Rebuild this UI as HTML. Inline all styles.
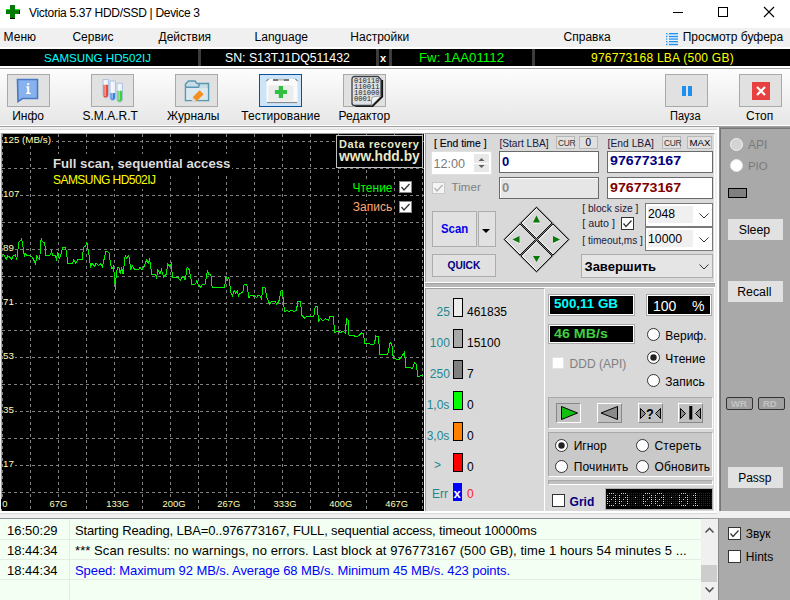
<!DOCTYPE html>
<html><head><meta charset='utf-8'><style>
html,body{margin:0;padding:0;width:790px;height:600px;overflow:hidden;background:#f0f0f0;font-family:'Liberation Sans', sans-serif}
.r{position:absolute}
.t{position:absolute;white-space:pre;font-family:'Liberation Sans', sans-serif}
</style></head><body>
<div class='r' style='left:0px;top:0px;width:790px;height:28px;background:#fff'></div>
<svg class='r' style='left:0;top:0' width='28' height='28' shape-rendering='crispEdges'>
<rect x='10' y='5' width='5' height='13' fill='#037a03'/><rect x='6' y='9' width='14' height='5' fill='#037a03'/>
<rect x='6' y='9' width='4' height='1' fill='#10e810'/><rect x='15' y='9' width='5' height='1' fill='#10e810'/>
<rect x='19' y='10' width='1' height='4' fill='#000'/><rect x='10' y='18' width='5' height='1' fill='#000'/>
</svg>
<div class='t' style='left:29px;top:6.85px;font-size:12px;line-height:12px;color:#000;letter-spacing:-0.3px;'>Victoria 5.37 HDD/SSD | Device 3</div>
<div class='r' style='left:673px;top:12px;width:10px;height:1px;background:#000'></div>
<div class='r' style='left:718px;top:7px;width:10px;height:10px;box-sizing:border-box;border:1px solid #000'></div>
<svg class='r' style='left:763px;top:6px' width='12' height='12'><path d='M1,1L11,11M11,1L1,11' stroke='#000' stroke-width='1.1'/></svg>
<div class='r' style='left:0px;top:28px;width:790px;height:19px;background:#f0f0f0'></div>
<div class='r' style='left:0px;top:47px;width:790px;height:2px;background:#fff'></div>
<div class='t' style='left:3.5999999999999996px;top:30.85px;font-size:12px;line-height:12px;color:#000;'>Меню</div>
<div class='t' style='left:72.4px;top:30.85px;font-size:12px;line-height:12px;color:#000;'>Сервис</div>
<div class='t' style='left:158.5px;top:30.85px;font-size:12px;line-height:12px;color:#000;'>Действия</div>
<div class='t' style='left:254.6px;top:30.85px;font-size:12px;line-height:12px;color:#000;'>Language</div>
<div class='t' style='left:350.3px;top:30.85px;font-size:12px;line-height:12px;color:#000;'>Настройки</div>
<div class='t' style='left:563.6px;top:30.85px;font-size:12px;line-height:12px;color:#000;'>Справка</div>
<div class='t' style='left:682.7px;top:30.85px;font-size:12px;line-height:12px;color:#000;'>Просмотр буфера</div>
<svg class='r' style='left:662px;top:30px' width='20' height='18'>
<rect x='4' y='4' width='12' height='2.2' fill='#c8e2fa'/><rect x='4' y='12.2' width='12' height='2.2' fill='#c8e2fa'/>
<g fill='#1e90f0'><rect x='4' y='3' width='1.3' height='1.2'/><rect x='7' y='3' width='9' height='1.2'/>
<rect x='4' y='6' width='1.3' height='1.2'/><rect x='7' y='6' width='9' height='1.2'/>
<rect x='4' y='11' width='1.3' height='1.2'/><rect x='7' y='11' width='9' height='1.2'/>
<rect x='4' y='14' width='1.3' height='1.2'/><rect x='7' y='14' width='9' height='1.2'/></g>
<g fill='#5ab0f8'><rect x='4' y='8.2' width='1.3' height='1.8'/><rect x='7' y='8.2' width='9' height='1.8'/></g>
</svg>
<div class='r' style='left:0px;top:49px;width:790px;height:17px;background:#000'></div>
<div class='r' style='left:198px;top:49px;width:3px;height:17px;background:#3c3c3c'></div>
<div class='r' style='left:376px;top:49px;width:3px;height:17px;background:#3c3c3c'></div>
<div class='r' style='left:389px;top:49px;width:3px;height:17px;background:#3c3c3c'></div>
<div class='r' style='left:532px;top:49px;width:3px;height:17px;background:#3c3c3c'></div>
<div class='t' style='left:44px;top:52.19px;font-size:11.6px;line-height:11.6px;color:#00ffff;'>SAMSUNG HD502IJ</div>
<div class='t' style='left:225px;top:51.59px;font-size:12.3px;line-height:12.3px;color:#fff;'>SN: S13TJ1DQ511432</div>
<div class='t' style='left:380px;top:52.69px;font-size:11px;line-height:11px;color:#fff;font-weight:700;'>x</div>
<div class='t' style='left:419px;top:51.85px;font-size:12px;line-height:12px;color:#00ff00;transform:scaleX(1.105);transform-origin:0 0;'>Fw: 1AA01112</div>
<div class='t' style='left:591px;top:51.85px;font-size:12px;line-height:12px;color:#ffff00;letter-spacing:0.25px;'>976773168 LBA (500 GB)</div>
<div class='r' style='left:0px;top:66px;width:790px;height:2px;background:#fff'></div>
<div class='r' style='left:0px;top:68px;width:790px;height:1px;background:#a0a0a0'></div>
<div class='r' style='left:0px;top:69px;width:790px;height:56px;background:linear-gradient(#fdfdfd,#e6e6e6)'></div>
<div class='r' style='left:0px;top:125px;width:790px;height:1px;background:#fff'></div>
<div class='r' style='left:0px;top:126px;width:790px;height:1px;background:#a0a0a0'></div>
<div class='r' style='left:0px;top:127px;width:790px;height:2px;background:#f0f0f0'></div>
<div class='r' style='left:0px;top:129px;width:790px;height:1px;background:#dadada'></div>
<div class='r' style='left:0px;top:130px;width:790px;height:3px;background:#fff'></div>
<div class='r' style='left:7px;top:74px;width:43px;height:33px;box-sizing:border-box;border:1px solid #a9a9a9;background:#e1e1e1'></div>
<div class='t' style='left:12.2px;top:109.85px;font-size:12px;line-height:12px;color:#000;'>Инфо</div>
<div class='r' style='left:91px;top:74px;width:43px;height:33px;box-sizing:border-box;border:1px solid #a9a9a9;background:#e1e1e1'></div>
<div class='t' style='left:82.5px;top:109.85px;font-size:12px;line-height:12px;color:#000;'>S.M.A.R.T</div>
<div class='r' style='left:175px;top:74px;width:43px;height:33px;box-sizing:border-box;border:1px solid #a9a9a9;background:#e1e1e1'></div>
<div class='t' style='left:167px;top:109.85px;font-size:12px;line-height:12px;color:#000;'>Журналы</div>
<div class='r' style='left:259px;top:74px;width:43px;height:33px;box-sizing:border-box;border:1px solid #0a50a0;background:#cce4f7'></div>
<div class='t' style='left:241.3px;top:109.85px;font-size:12px;line-height:12px;color:#000;letter-spacing:0.1px;'>Тестирование</div>
<div class='r' style='left:343px;top:74px;width:43px;height:33px;box-sizing:border-box;border:1px solid #a9a9a9;background:#e1e1e1'></div>
<div class='t' style='left:338.5px;top:109.85px;font-size:12px;line-height:12px;color:#000;'>Редактор</div>
<div class='r' style='left:665px;top:74px;width:43px;height:33px;box-sizing:border-box;border:1px solid #a9a9a9;background:#e1e1e1'></div>
<div class='t' style='left:669.5px;top:109.85px;font-size:12px;line-height:12px;color:#000;transform:scaleX(0.915);transform-origin:0 0;'>Пауза</div>
<div class='r' style='left:739px;top:74px;width:43px;height:33px;box-sizing:border-box;border:1px solid #a9a9a9;background:#e1e1e1'></div>
<div class='t' style='left:746px;top:109.85px;font-size:12px;line-height:12px;color:#000;'>Стоп</div>
<svg class='r' style='left:16px;top:78px' width='24' height='26'>
<path d='M1.5,1.5h20v19h-15l-4.5,3z' fill='#88b2ee' stroke='#4a78c4' stroke-width='1.6'/>
<rect x='11.2' y='5.2' width='2' height='1.8' fill='#fff'/><path d='M10.2,8.3h3v6.4h1.6v1.3h-4.8v-1.3h1.2v-5.1h-1z' fill='#fff'/>
</svg>
<svg class='r' style='left:98px;top:76px' width='30' height='30'>
<g stroke='#a8c0e0' stroke-width='0.9'>
<path d='M5,3.5h5.5v15.75a2.75,2.75 0 0 1 -5.5,0z' fill='#eef3fb'/>
<path d='M12,5h5.5v16.75a2.75,2.75 0 0 1 -5.5,0z' fill='#eef3fb'/>
<path d='M19,7.25h5.5v16.25a2.75,2.75 0 0 1 -5.5,0z' fill='#eef3fb'/></g>
<path d='M5.4,8.75h4.7v10.5a2.35,2.35 0 0 1 -4.7,0z' fill='#e84a3a'/>
<path d='M12.4,17h4.7v4.75a2.35,2.35 0 0 1 -4.7,0z' fill='#3a84e0'/>
<path d='M19.4,14.75h4.7v8.75a2.35,2.35 0 0 1 -4.7,0z' fill='#44cc44'/>
<g fill='#fff' opacity='0.6'><rect x='6.5' y='5' width='1.2' height='15'/><rect x='13.5' y='6.5' width='1.2' height='16'/><rect x='20.5' y='9' width='1.2' height='15'/></g>
</svg>
<svg class='r' style='left:182px;top:76px' width='30' height='30'>
<path d='M3.5,24.5V8L6.5,5H13L15,7.5H26.5V24.5Z' fill='#c9dde6' stroke='#5a98b2' stroke-width='1.5'/>
<path d='M4.3,12H25.7V23.8H4.3Z' fill='#dbe9ef'/>
<path d='M3.5,11.2H16.5L17.5,7.8' fill='none' stroke='#5a98b2' stroke-width='1.5'/>
<path d='M10.6,21.2L17.6,14.2L21.6,18.2L14.6,25.2Z' fill='#f59020'/>
<path d='M10.6,21.2L14.6,25.2L9.5,26.5Z' fill='#d8d8d8'/>
</svg>
<svg class='r' style='left:262px;top:76px' width='38' height='30'>
<path d='M4.5,5L6.5,3H33.5L35.5,5V25.5a1,1 0 0 1 -1,1H5.5a1,1 0 0 1 -1,-1Z' fill='#fbfbfb'/>
<path d='M5,26.5H35' stroke='#8a8a8a' stroke-width='1.2'/>
<path d='M4.3,5.2L6.8,2.7M35.7,5.2L33.2,2.7' stroke='#555' stroke-width='1'/>
<rect x='11' y='3.2' width='5' height='1.6' fill='#555'/><rect x='16' y='2.8' width='6' height='1.8' fill='#b8b8b8'/><rect x='22' y='3.2' width='5' height='1.6' fill='#555'/>
<rect x='6.25' y='9.25' width='25.25' height='15.5' rx='1.5' fill='#ececec'/>
<path d='M16.75,10H21V14H25V18H21V22H16.75V18H12.9V14H16.75Z' fill='#30c040'/>
</svg>
<svg class='r' style='left:348px;top:74px' width='38' height='34'>
<path d='M34,6V22.5L24.5,32H7.5' fill='none' stroke='#111' stroke-width='2.2'/>
<path d='M6.5,2.5H30L33,5.5V22L23.5,31.5H6.5a2.5,2.5 0 0 1 -2.5,-2.5V5a2.5,2.5 0 0 1 2.5,-2.5Z' fill='#dde1e5' stroke='#3a4048' stroke-width='1.3'/>
<path d='M33,22L23.5,31.5V25.5a3,3 0 0 1 3,-3Z' fill='#f2f2f2' stroke='#888' stroke-width='0.8'/>
<g font-family='Liberation Mono' font-size='7.1' fill='#1a1a1a'>
<text x='6' y='8.6'>010110</text><text x='6' y='14.9'>110011</text><text x='6' y='21.1'>101000</text><text x='6' y='27.3'>0001</text></g>
</svg>
<div class='r' style='left:682px;top:86px;width:4px;height:10px;background:#2090f0'></div>
<div class='r' style='left:688px;top:86px;width:4px;height:10px;background:#2090f0'></div>
<div class='r' style='left:752px;top:82px;width:18px;height:18px;background:#e84040'></div>
<svg class='r' style='left:752px;top:82px' width='18' height='18'><path d='M5,5L13,13M13,5L5,13' stroke='#fff' stroke-width='2.2'/></svg>
<div class='r' style='left:0px;top:133px;width:790px;height:385px;background:#f0f0f0'></div>
<div class='r' style='left:1px;top:133px;width:424px;height:379px;box-sizing:border-box;border-top:1px solid #a0a0a0;border-left:1px solid #a0a0a0;border-right:1px solid #fff;border-bottom:1px solid #fff;background:#000'></div>
<svg class='r' style='left:0;top:0' width='790' height='600' shape-rendering='crispEdges'><line x1='2' y1='141.5' x2='424' y2='141.5' stroke='#808080' stroke-dasharray='3 3'/><line x1='2' y1='168.5' x2='424' y2='168.5' stroke='#808080' stroke-dasharray='3 3'/><line x1='2' y1='195.5' x2='424' y2='195.5' stroke='#808080' stroke-dasharray='3 3'/><line x1='2' y1='222.5' x2='424' y2='222.5' stroke='#808080' stroke-dasharray='3 3'/><line x1='2' y1='249.5' x2='424' y2='249.5' stroke='#808080' stroke-dasharray='3 3'/><line x1='2' y1='276.5' x2='424' y2='276.5' stroke='#808080' stroke-dasharray='3 3'/><line x1='2' y1='303.5' x2='424' y2='303.5' stroke='#808080' stroke-dasharray='3 3'/><line x1='2' y1='330.5' x2='424' y2='330.5' stroke='#808080' stroke-dasharray='3 3'/><line x1='2' y1='357.5' x2='424' y2='357.5' stroke='#808080' stroke-dasharray='3 3'/><line x1='2' y1='384.5' x2='424' y2='384.5' stroke='#808080' stroke-dasharray='3 3'/><line x1='2' y1='411.5' x2='424' y2='411.5' stroke='#808080' stroke-dasharray='3 3'/><line x1='2' y1='438.5' x2='424' y2='438.5' stroke='#808080' stroke-dasharray='3 3'/><line x1='2' y1='465.5' x2='424' y2='465.5' stroke='#808080' stroke-dasharray='3 3'/><line x1='2' y1='492.5' x2='424' y2='492.5' stroke='#808080' stroke-dasharray='3 3'/><line x1='2.5' y1='134' x2='2.5' y2='511' stroke='#808080' stroke-dasharray='3 3'/><line x1='30.5' y1='134' x2='30.5' y2='511' stroke='#808080' stroke-dasharray='3 3'/><line x1='58.5' y1='134' x2='58.5' y2='511' stroke='#808080' stroke-dasharray='3 3'/><line x1='86.5' y1='134' x2='86.5' y2='511' stroke='#808080' stroke-dasharray='3 3'/><line x1='114.5' y1='134' x2='114.5' y2='511' stroke='#808080' stroke-dasharray='3 3'/><line x1='142.5' y1='134' x2='142.5' y2='511' stroke='#808080' stroke-dasharray='3 3'/><line x1='170.5' y1='134' x2='170.5' y2='511' stroke='#808080' stroke-dasharray='3 3'/><line x1='198.5' y1='134' x2='198.5' y2='511' stroke='#808080' stroke-dasharray='3 3'/><line x1='226.5' y1='134' x2='226.5' y2='511' stroke='#808080' stroke-dasharray='3 3'/><line x1='254.5' y1='134' x2='254.5' y2='511' stroke='#808080' stroke-dasharray='3 3'/><line x1='282.5' y1='134' x2='282.5' y2='511' stroke='#808080' stroke-dasharray='3 3'/><line x1='310.5' y1='134' x2='310.5' y2='511' stroke='#808080' stroke-dasharray='3 3'/><line x1='338.5' y1='134' x2='338.5' y2='511' stroke='#808080' stroke-dasharray='3 3'/><line x1='366.5' y1='134' x2='366.5' y2='511' stroke='#808080' stroke-dasharray='3 3'/><line x1='394.5' y1='134' x2='394.5' y2='511' stroke='#808080' stroke-dasharray='3 3'/><line x1='422.5' y1='134' x2='422.5' y2='511' stroke='#808080' stroke-dasharray='3 3'/></svg>
<svg class='r' style='left:0;top:0' width='790' height='600'><path d='M2.1,255.8 L3.5,254.4 L6.3,259.2 L7.7,255.8 L9.1,256.5 L11.8,259.2 L13.2,255.8 L15.3,255.1 L16.7,259.5 L18.8,242.5 L20.9,240.4 L21.6,238.4 L23.0,247.4 L24.4,255.8 L25.8,253.7 L27.2,255.8 L29.9,255.8 L32.0,257.2 L33.4,259.2 L35.5,263.4 L36.9,255.8 L38.3,258.6 L39.7,259.2 L41.1,238.4 L42.5,241.8 L44.6,242.5 L46.0,255.8 L50.1,255.1 L51.5,251.6 L52.9,255.8 L55.0,255.1 L56.4,259.2 L57.8,251.6 L59.2,258.6 L60.6,255.8 L62.7,247.4 L65.5,247.4 L66.9,255.8 L67.5,263.4 L72.4,263.4 L73.8,259.9 L75.9,263.4 L78.0,259.2 L82.2,259.2 L83.6,247.4 L85.7,246.0 L87.0,242.5 L89.1,255.8 L90.5,266.9 L91.9,263.4 L94.7,266.2 L96.1,263.4 L98.9,265.5 L100.3,263.4 L102.4,266.9 L104.5,257.2 L105.8,251.6 L107.9,251.6 L109.2,253.2 L110.6,264.4 L112.0,269.2 L113.4,266.5 L114.7,279.0 L115.4,290.1 L116.1,276.2 L117.5,267.2 L118.9,267.9 L120.3,274.1 L121.7,267.2 L123.1,274.1 L125.2,255.3 L126.6,258.1 L128.7,255.3 L130.8,269.9 L132.2,265.8 L134.9,269.9 L138.4,269.9 L139.8,267.2 L141.9,269.9 L144.0,266.5 L146.8,259.5 L148.2,263.0 L149.6,259.5 L151.7,274.1 L155.1,274.1 L156.5,277.6 L157.9,269.9 L160.0,274.1 L161.4,269.9 L163.5,276.9 L166.3,274.1 L167.7,263.7 L169.8,266.5 L171.2,263.7 L172.5,277.6 L177.4,276.9 L180.2,280.4 L182.3,276.9 L184.4,277.6 L185.1,280.4 L187.2,267.2 L189.3,269.9 L192.0,284.6 L195.5,283.9 L196.9,280.4 L198.3,284.6 L200.4,287.4 L202.5,284.6 L205.3,283.9 L207.4,270.6 L208.8,274.1 L210.8,274.1 L212.2,287.4 L224.6,287.0 L226.0,277.3 L227.4,280.1 L228.8,277.3 L230.9,292.6 L232.3,296.1 L234.4,290.5 L235.8,293.3 L237.2,290.5 L238.6,296.1 L239.9,293.3 L242.7,292.6 L244.1,284.9 L246.9,284.9 L249.0,298.2 L250.4,295.4 L253.2,296.1 L254.6,295.4 L256.7,297.5 L258.1,295.4 L260.1,296.1 L261.5,298.9 L262.9,287.7 L265.0,287.7 L267.1,298.2 L269.9,304.4 L271.3,301.0 L275.5,301.7 L276.9,304.4 L278.9,301.0 L281.0,291.2 L282.4,290.5 L284.5,311.4 L287.3,310.7 L288.7,311.4 L292.2,310.0 L293.6,311.4 L296.4,310.7 L297.7,301.7 L300.5,301.7 L301.9,315.6 L304.7,318.4 L306.8,316.3 L313.8,316.3 L315.2,306.5 L317.2,306.5 L318.6,321.2 L319.0,320.9 L320.5,318.5 L322.9,320.9 L325.3,318.5 L328.5,320.1 L330.0,316.1 L333.2,316.1 L334.8,332.7 L336.4,331.9 L338.7,331.2 L340.3,332.7 L342.7,331.2 L345.1,332.7 L346.7,318.5 L348.2,320.1 L349.0,335.1 L353.8,335.1 L355.4,336.7 L358.5,335.9 L361.7,332.7 L363.3,333.5 L364.9,343.8 L367.2,343.0 L369.6,343.8 L372.0,344.6 L374.4,343.8 L375.9,335.9 L378.3,336.7 L379.9,354.1 L387.8,354.1 L390.2,342.2 L391.8,344.6 L393.3,358.1 L395.7,358.9 L398.9,359.6 L401.3,357.3 L404.4,352.5 L406.0,367.6 L408.4,367.6 L412.3,368.3 L414.7,362.8 L416.3,364.4 L417.9,376.3 L422.6,375.5' fill='none' stroke='#00f000' stroke-width='1' shape-rendering='crispEdges'/></svg>
<div class='t' style='left:3px;top:135.1px;font-size:9.8px;line-height:10px;color:#ffffb8;background:#000;padding-right:1px'>125 (MB/s)</div>
<div class='t' style='left:3px;top:189.1px;font-size:9.8px;line-height:10px;color:#ffffb8;background:#000;padding-right:1px'>107</div>
<div class='t' style='left:3px;top:243.1px;font-size:9.8px;line-height:10px;color:#ffffb8;background:#000;padding-right:1px'>89</div>
<div class='t' style='left:3px;top:297.1px;font-size:9.8px;line-height:10px;color:#ffffb8;background:#000;padding-right:1px'>71</div>
<div class='t' style='left:3px;top:351.1px;font-size:9.8px;line-height:10px;color:#ffffb8;background:#000;padding-right:1px'>53</div>
<div class='t' style='left:3px;top:405.1px;font-size:9.8px;line-height:10px;color:#ffffb8;background:#000;padding-right:1px'>35</div>
<div class='t' style='left:3px;top:459.1px;font-size:9.8px;line-height:10px;color:#ffffb8;background:#000;padding-right:1px'>17</div>
<div class='t' style='left:1.3px;top:498.9px;font-size:9.4px;line-height:10px;color:#ffffb8;background:#000;padding:0 1px'>0</div>
<div class='t' style='left:48.5px;top:498.9px;font-size:9.4px;line-height:10px;color:#ffffb8;background:#000;padding:0 1px'>67G</div>
<div class='t' style='left:105.2px;top:498.9px;font-size:9.4px;line-height:10px;color:#ffffb8;background:#000;padding:0 1px'>133G</div>
<div class='t' style='left:161.5px;top:498.9px;font-size:9.4px;line-height:10px;color:#ffffb8;background:#000;padding:0 1px'>200G</div>
<div class='t' style='left:216.3px;top:498.9px;font-size:9.4px;line-height:10px;color:#ffffb8;background:#000;padding:0 1px'>267G</div>
<div class='t' style='left:272.5px;top:498.9px;font-size:9.4px;line-height:10px;color:#ffffb8;background:#000;padding:0 1px'>333G</div>
<div class='t' style='left:328.3px;top:498.9px;font-size:9.4px;line-height:10px;color:#ffffb8;background:#000;padding:0 1px'>400G</div>
<div class='t' style='left:384.2px;top:498.9px;font-size:9.4px;line-height:10px;color:#ffffb8;background:#000;padding:0 1px'>467G</div>
<div class='t' style='left:53px;top:156.83px;font-size:13.2px;line-height:13.2px;color:#dcdcdc;font-weight:700;background:#000;padding:3px 2px 3px 5px;margin-left:-5px;margin-top:-3px'>Full scan, sequential access</div>
<div class='t' style='left:53px;top:173.85px;font-size:12px;line-height:12px;color:#ffff00;letter-spacing:-0.55px;background:#000;padding:2px 2px 3px 5px;margin-left:-5px;margin-top:-2px'>SAMSUNG HD502IJ</div>
<div class='r' style='left:336px;top:135px;width:87px;height:33px;box-sizing:border-box;border:1px solid #c0c0c0;background:#000'></div>
<div class='t' style='left:339px;top:138.69px;font-size:11px;line-height:11px;color:#e8e8c8;font-weight:700;letter-spacing:0.6px;'>Data recovery</div>
<div class='t' style='left:339px;top:150.33px;font-size:13.8px;line-height:13.8px;color:#e8e8c8;font-weight:700;'>www.hdd.by</div>
<div class='t' style='left:352.5px;top:181.85px;font-size:12px;line-height:12px;color:#00ff00;background:#000'>Чтение</div>
<div class='t' style='left:352.8px;top:201.35px;font-size:12px;line-height:12px;color:#ffa870;background:#000'>Запись</div>
<div class='r' style='left:399px;top:181px;width:13px;height:12px;box-sizing:border-box;border:1px solid #888;background:#fff'></div>
<svg class='r' style='left:399px;top:181px' width='13' height='12'><path d='M2.5,6l2.5,3l5.5,-6' fill='none' stroke='#333' stroke-width='1.3'/></svg>
<div class='r' style='left:399px;top:201px;width:13px;height:12px;box-sizing:border-box;border:1px solid #888;background:#fff'></div>
<svg class='r' style='left:399px;top:201px' width='13' height='12'><path d='M2.5,6l2.5,3l5.5,-6' fill='none' stroke='#333' stroke-width='1.3'/></svg>
<div class='r' style='left:425px;top:133px;width:290px;height:150px;box-sizing:border-box;border-top:1px solid #a0a0a0;border-left:1px solid #a0a0a0;border-right:1px solid #fff;background:#d9d9d9'></div>
<div class='r' style='left:425px;top:282px;width:290px;height:1px;background:#fff'></div>
<div class='r' style='left:425px;top:283px;width:290px;height:1px;background:#a0a0a0'></div>
<div class='r' style='left:425px;top:284px;width:290px;height:3px;background:#b8b8b8'></div>
<div class='r' style='left:425px;top:287px;width:290px;height:1px;background:#fff'></div>
<div class='t' style='left:434px;top:139.20px;font-size:10.4px;line-height:10.4px;color:#000018;-webkit-text-stroke:0.12px #000018'>[ End time ]</div>
<div class='r' style='left:431px;top:151px;width:61px;height:24px;box-sizing:border-box;border:1px solid #e0e0e0;background:#fff'></div>
<div class='t' style='left:433.5px;top:157.74px;font-size:12.6px;line-height:12.6px;color:#7a7a7a;'>12:00</div>
<div class='r' style='left:474px;top:154px;width:15px;height:9px;background:#e8e8e8'></div>
<div class='r' style='left:474px;top:164px;width:15px;height:8px;background:#e8e8e8'></div>
<svg class='r' style='left:474px;top:154px' width='15' height='18'><path d='M4.5,7l3,-3l3,3z M4.5,11l3,3l3,-3z' fill='#606060'/></svg>
<div class='r' style='left:432px;top:182px;width:13px;height:12px;box-sizing:border-box;border:1px solid #c8c8c8;background:#f4f4f4'></div>
<svg class='r' style='left:432px;top:182px' width='13' height='12'><path d='M2.5,6l2.5,3l5.5,-6' fill='none' stroke='#b0b0b0' stroke-width='1.2'/></svg>
<div class='t' style='left:451.5px;top:182.27px;font-size:11.5px;line-height:11.5px;color:#808080;letter-spacing:0.1px;'>Timer</div>
<div class='t' style='left:499.4px;top:138.87px;font-size:10.2px;line-height:10.2px;color:#1a1a40;'>[Start LBA]</div>
<div class='r' style='left:556px;top:136px;width:19px;height:13px;box-sizing:border-box;border:1px solid #b8b8b8;background:#e0e0e0'></div>
<div class='t' style='left:558px;top:138.89px;font-size:8.4px;line-height:8.4px;color:#333;letter-spacing:-0.3px;'>CUR</div>
<div class='r' style='left:579px;top:136px;width:19px;height:13px;box-sizing:border-box;border:1px solid #b8b8b8;background:#e0e0e0'></div>
<div class='t' style='left:585.5px;top:138.04px;font-size:10px;line-height:10px;color:#000;'>0</div>
<div class='t' style='left:607.6px;top:138.79px;font-size:10.3px;line-height:10.3px;color:#1a1a40;'>[End LBA]</div>
<div class='r' style='left:662px;top:136px;width:19px;height:13px;box-sizing:border-box;border:1px solid #b8b8b8;background:#e0e0e0'></div>
<div class='t' style='left:664px;top:138.89px;font-size:8.4px;line-height:8.4px;color:#333;letter-spacing:-0.3px;'>CUR</div>
<div class='r' style='left:687px;top:136px;width:25px;height:13px;box-sizing:border-box;border:1px solid #b8b8b8;background:#e0e0e0'></div>
<div class='t' style='left:689.5px;top:138.29px;font-size:9.7px;line-height:9.7px;color:#000;'>MAX</div>
<div class='r' style='left:499px;top:151px;width:100px;height:22px;box-sizing:border-box;border:1px solid #6a6a6a;background:#fff'></div>
<div class='t' style='left:502px;top:154.60px;font-size:13px;line-height:13px;color:#000080;font-weight:700;'>0</div>
<div class='r' style='left:499px;top:177px;width:100px;height:22px;box-sizing:border-box;border:1px solid #6a6a6a;background:#e6e6e6;box-shadow:inset 1px 1px 0 #fff'></div>
<div class='t' style='left:502px;top:180.70px;font-size:13px;line-height:13px;color:#8a8a8a;font-weight:700;'>0</div>
<div class='r' style='left:607px;top:151px;width:106px;height:22px;box-sizing:border-box;border:1px solid #6a6a6a;background:#fff'></div>
<div class='t' style='left:610px;top:155.45px;font-size:12px;line-height:12px;color:#000080;font-weight:700;transform:scaleX(1.185);transform-origin:0 0;'>976773167</div>
<div class='r' style='left:607px;top:177px;width:106px;height:22px;box-sizing:border-box;border:1px solid #6a6a6a;background:#fff'></div>
<div class='t' style='left:610px;top:181.55px;font-size:12px;line-height:12px;color:#800000;font-weight:700;transform:scaleX(1.185);transform-origin:0 0;'>976773167</div>
<div class='r' style='left:432px;top:211px;width:45px;height:36px;box-sizing:border-box;border:1px solid #adadad;background:#e1e1e1'></div>
<div class='t' style='left:441.3px;top:222.30px;font-size:13px;line-height:13px;color:#0000ee;font-weight:700;transform:scaleX(0.875);transform-origin:0 0;'>Scan</div>
<div class='r' style='left:478px;top:211px;width:18px;height:36px;box-sizing:border-box;border:1px solid #adadad;background:#e1e1e1'></div>
<svg class='r' style='left:478px;top:211px' width='18' height='36'><path d='M4,18h8l-4,4z' fill='#000'/></svg>
<div class='r' style='left:432px;top:254px;width:64px;height:23px;box-sizing:border-box;border:1px solid #adadad;background:#e1e1e1'></div>
<div class='t' style='left:447.5px;top:260.67px;font-size:10.2px;line-height:10.2px;color:#000080;font-weight:700;'>QUICK</div>
<svg class='r' style='left:0;top:0' width='790' height='600'><path d='M536.5,206.0L570.0,239.5L536.5,273.0L503.0,239.5Z' fill='#9a9a9a'/><path d='M536.5,207.4L552.1,223.0L536.5,238.6L520.9,223.0Z' fill='#d8d8d8' stroke='#000' stroke-width='1'/><path d='M536.5,208.8L522.3,223.0L536.5,237.2' fill='none' stroke='#fff' stroke-width='1'/><path d='M553.0,223.9L568.6,239.5L553.0,255.1L537.4,239.5Z' fill='#d8d8d8' stroke='#000' stroke-width='1'/><path d='M553.0,225.3L538.8,239.5L553.0,253.7' fill='none' stroke='#fff' stroke-width='1'/><path d='M536.5,240.4L552.1,256.0L536.5,271.6L520.9,256.0Z' fill='#d8d8d8' stroke='#000' stroke-width='1'/><path d='M536.5,241.8L522.3,256.0L536.5,270.20000000000005' fill='none' stroke='#fff' stroke-width='1'/><path d='M520.0,223.9L535.6,239.5L520.0,255.1L504.4,239.5Z' fill='#d8d8d8' stroke='#000' stroke-width='1'/><path d='M520.0,225.3L505.79999999999995,239.5L520.0,253.7' fill='none' stroke='#fff' stroke-width='1'/><g fill='#fff'><path d='M533,223.5H540.5L540,222.5H533Z'/><path d='M512.5,240.5L520.5,244V243Z'/><path d='M553,244L560.5,240.5L553,243Z'/><path d='M533,257L536.5,263L540.5,257Z' opacity='0'/></g><g fill='#087808'><path d='M536.5,215.5L540,222.5H533Z'/><path d='M512.5,239.5L519.5,236V243Z'/><path d='M560,239.5L553,236V243Z'/><path d='M536.5,262L540,256H533Z'/></g></svg>
<div class='t' style='left:582.3px;top:203.67px;font-size:10.2px;line-height:10.2px;color:#1a1a40;'>[ block size ]</div>
<div class='t' style='left:582.3px;top:217.95px;font-size:10.7px;line-height:10.7px;color:#1a1a40;'>[ auto ]</div>
<div class='r' style='left:621px;top:217px;width:13px;height:13px;box-sizing:border-box;border:1px solid #333;background:#fff'></div>
<svg class='r' style='left:621px;top:217px' width='13' height='13'><path d='M2.5,6.5l2.5,3l5.5,-6' fill='none' stroke='#333' stroke-width='1.2'/></svg>
<div class='t' style='left:582.3px;top:236.26px;font-size:10.1px;line-height:10.1px;color:#1a1a40;'>[ timeout,ms ]</div>
<div class='r' style='left:645px;top:203px;width:68px;height:24px;box-sizing:border-box;border:1px solid #7a7a7a;background:#fff'></div>
<div class='r' style='left:648px;top:206px;width:45px;height:17px;background:#f0f0f0'></div>
<div class='t' style='left:648px;top:208.18px;font-size:12.2px;line-height:12.2px;color:#000;'>2048</div>
<div class='r' style='left:645px;top:227px;width:68px;height:24px;box-sizing:border-box;border:1px solid #7a7a7a;background:#fff'></div>
<div class='r' style='left:648px;top:230px;width:45px;height:17px;background:#f0f0f0'></div>
<div class='t' style='left:648px;top:232.59px;font-size:12.3px;line-height:12.3px;color:#000;'>10000</div>
<svg class='r' style='left:699px;top:213px' width='10' height='6'><path d='M0.5,0.5l4.5,4.5l4.5,-4.5' fill='none' stroke='#333' stroke-width='1'/></svg>
<svg class='r' style='left:699px;top:237px' width='10' height='6'><path d='M0.5,0.5l4.5,4.5l4.5,-4.5' fill='none' stroke='#333' stroke-width='1'/></svg>
<div class='r' style='left:581px;top:254px;width:132px;height:24px;box-sizing:border-box;border:1px solid #adadad;background:#e5e5e5'></div>
<div class='t' style='left:584.5px;top:260.00px;font-size:13px;line-height:13px;color:#000;font-weight:700;'>Завершить</div>
<svg class='r' style='left:699px;top:264px' width='10' height='6'><path d='M0.5,0.5l4.5,4.5l4.5,-4.5' fill='none' stroke='#333' stroke-width='1'/></svg>
<div class='r' style='left:425px;top:288px;width:120px;height:223px;box-sizing:border-box;border-top:1px solid #a0a0a0;border-left:1px solid #a0a0a0;border-right:1px solid #fff;background:#d9d9d9'></div>
<div class='r' style='left:453px;top:298px;width:10px;height:19px;box-sizing:border-box;border:1px solid #000;background:#ececec'></div>
<div class='t' style='left:436.5px;top:305.85px;font-size:12px;line-height:12px;color:#1e8890;'>25</div>
<div class='t' style='left:467px;top:305.85px;font-size:12px;line-height:12px;color:#000;'>461835</div>
<div class='r' style='left:453px;top:329px;width:10px;height:19px;box-sizing:border-box;border:1px solid #000;background:#a8a8a8'></div>
<div class='t' style='left:429.8px;top:336.85px;font-size:12px;line-height:12px;color:#1e8890;'>100</div>
<div class='t' style='left:467px;top:336.85px;font-size:12px;line-height:12px;color:#000;'>15100</div>
<div class='r' style='left:453px;top:360px;width:10px;height:19px;box-sizing:border-box;border:1px solid #000;background:#808080'></div>
<div class='t' style='left:429.8px;top:367.85px;font-size:12px;line-height:12px;color:#1e8890;'>250</div>
<div class='t' style='left:467px;top:367.85px;font-size:12px;line-height:12px;color:#000;'>7</div>
<div class='r' style='left:453px;top:391px;width:10px;height:19px;box-sizing:border-box;border:1px solid #000;background:#00ff00'></div>
<div class='t' style='left:426.7px;top:398.85px;font-size:12px;line-height:12px;color:#1e8890;'>1,0s</div>
<div class='t' style='left:467px;top:398.85px;font-size:12px;line-height:12px;color:#000;'>0</div>
<div class='r' style='left:453px;top:422px;width:10px;height:19px;box-sizing:border-box;border:1px solid #000;background:#ff8000'></div>
<div class='t' style='left:426.7px;top:429.85px;font-size:12px;line-height:12px;color:#1e8890;'>3,0s</div>
<div class='t' style='left:467px;top:429.85px;font-size:12px;line-height:12px;color:#000;'>0</div>
<div class='r' style='left:453px;top:453px;width:10px;height:19px;box-sizing:border-box;border:1px solid #000;background:#ff0000'></div>
<div class='t' style='left:434px;top:459.35px;font-size:12px;line-height:12px;color:#1e8890;'>&gt;</div>
<div class='t' style='left:467px;top:460.85px;font-size:12px;line-height:12px;color:#000;'>0</div>
<div class='r' style='left:453px;top:483px;width:9px;height:18px;background:#0000ff'></div>
<div class='t' style='left:453.5px;top:487.00px;font-size:13px;line-height:13px;color:#fff;font-weight:700;'>x</div>
<div class='t' style='left:432px;top:487.85px;font-size:12px;line-height:12px;color:#1e8890;'>Err</div>
<div class='t' style='left:467px;top:487.85px;font-size:12px;line-height:12px;color:#ff2020;'>0</div>
<div class='r' style='left:545px;top:288px;width:170px;height:223px;box-sizing:border-box;border-right:1px solid #fff;background:#d9d9d9'></div>
<div class='r' style='left:548px;top:294px;width:87px;height:22px;box-sizing:border-box;border:1px solid #a8a8a8;box-shadow:inset -1px -1px 0 #fff;background:#000'></div>
<div class='r' style='left:549px;top:295px;width:85px;height:20px;box-sizing:border-box;border:1px solid #fff;border-right:0;border-bottom:0'></div>
<div class='t' style='left:554px;top:298.35px;font-size:12px;line-height:12px;color:#00ffff;font-weight:700;transform:scaleX(1.115);transform-origin:0 0;'>500,11 GB</div>
<div class='r' style='left:646px;top:294px;width:66px;height:22px;box-sizing:border-box;border:1px solid #a8a8a8;box-shadow:inset -1px -1px 0 #fff;background:#000'></div>
<div class='r' style='left:647px;top:295px;width:64px;height:20px;box-sizing:border-box;border:1px solid #fff;border-right:0;border-bottom:0'></div>
<div class='t' style='left:653px;top:298.66px;font-size:14px;line-height:14px;color:#fff;'>100</div>
<div class='t' style='left:692px;top:298.66px;font-size:14px;line-height:14px;color:#fff;'>%</div>
<div class='r' style='left:548px;top:324px;width:87px;height:20px;box-sizing:border-box;border:1px solid #a8a8a8;box-shadow:inset -1px -1px 0 #fff;background:#000'></div>
<div class='r' style='left:549px;top:325px;width:85px;height:18px;box-sizing:border-box;border:1px solid #fff;border-right:0;border-bottom:0'></div>
<div class='t' style='left:554px;top:328.23px;font-size:12.5px;line-height:12.5px;color:#40d040;font-weight:700;transform:scaleX(1.14);transform-origin:0 0;'>46 MB/s</div>
<svg class='r' style='left:647px;top:328px' width='13' height='13'><circle cx='6.5' cy='6.5' r='6' fill='#fff' stroke='#333' stroke-width='1'/></svg>
<div class='t' style='left:665.3px;top:329.85px;font-size:12px;line-height:12px;color:#000;'>Вериф.</div>
<svg class='r' style='left:647px;top:351px' width='13' height='13'><circle cx='6.5' cy='6.5' r='6' fill='#fff' stroke='#333' stroke-width='1'/><circle cx='6.5' cy='6.5' r='3.2' fill='#222'/></svg>
<div class='t' style='left:665.3px;top:352.85px;font-size:12px;line-height:12px;color:#000;'>Чтение</div>
<svg class='r' style='left:647px;top:374px' width='13' height='13'><circle cx='6.5' cy='6.5' r='6' fill='#fff' stroke='#333' stroke-width='1'/></svg>
<div class='t' style='left:665.3px;top:375.85px;font-size:12px;line-height:12px;color:#000;'>Запись</div>
<div class='r' style='left:552px;top:357px;width:12px;height:12px;box-sizing:border-box;border:1px solid #e4e4e4;background:#fff'></div>
<div class='t' style='left:569.6px;top:357.85px;font-size:12px;line-height:12px;color:#808080;'>DDD (API)</div>
<div class='r' style='left:548px;top:397px;width:165px;height:32px;box-sizing:border-box;border-top:1px solid #a8a8a8;border-left:1px solid #a8a8a8;border-right:1px solid #fff;border-bottom:1px solid #fff;background:#c9c9c9'></div>
<div class='r' style='left:556px;top:403px;width:25px;height:20px;box-sizing:border-box;border-top:1px solid #888;border-left:1px solid #888;border-right:1px solid #fff;border-bottom:1px solid #fff;background:#c0c0c0'></div>
<div class='r' style='left:597px;top:403px;width:25px;height:20px;box-sizing:border-box;border-top:1px solid #fff;border-left:1px solid #fff;border-right:1px solid #888;border-bottom:1px solid #888;background:#c0c0c0'></div>
<div class='r' style='left:638px;top:403px;width:25px;height:20px;box-sizing:border-box;border-top:1px solid #fff;border-left:1px solid #fff;border-right:1px solid #888;border-bottom:1px solid #888;background:#c0c0c0'></div>
<div class='r' style='left:678px;top:403px;width:25px;height:20px;box-sizing:border-box;border-top:1px solid #fff;border-left:1px solid #fff;border-right:1px solid #888;border-bottom:1px solid #888;background:#c0c0c0'></div>
<svg class='r' style='left:0;top:0' width='790' height='600'>
<path d='M561.5,406.5v13l16,-6.5z' fill='#10c010' stroke='#000' stroke-width='1'/>
<path d='M617.5,406.5v13l-16.5,-6.5z' fill='#8a8a8a' stroke='#000' stroke-width='1'/>
<path d='M640.5,408.5v10l5,-5z' fill='#8a8a8a' stroke='#000' stroke-width='1'/>
<path d='M660.5,408.5v10l-5,-5z' fill='#8a8a8a' stroke='#000' stroke-width='1'/>
<path d='M680.5,408.5v10l5,-5z' fill='#8a8a8a' stroke='#000' stroke-width='1'/>
<path d='M700.5,408.5v10l-5,-5z' fill='#8a8a8a' stroke='#000' stroke-width='1'/>
<rect x='689.3' y='406' width='3' height='13.5' fill='#000'/>
</svg>
<div class='t' style='left:646.2px;top:406.39px;font-size:15.5px;line-height:15.5px;color:#000;font-weight:700;transform:scaleX(0.82);transform-origin:0 0;'>?</div>
<div class='r' style='left:548px;top:432px;width:165px;height:45px;box-sizing:border-box;border-top:1px solid #a8a8a8;border-left:1px solid #a8a8a8;border-right:1px solid #fff;border-bottom:1px solid #fff;background:#c9c9c9'></div>
<svg class='r' style='left:555px;top:439px' width='13' height='13'><circle cx='6.5' cy='6.5' r='6' fill='#fff' stroke='#333' stroke-width='1'/><circle cx='6.5' cy='6.5' r='3.2' fill='#222'/></svg>
<div class='t' style='left:573.7px;top:439.85px;font-size:12px;line-height:12px;color:#000;'>Игнор</div>
<svg class='r' style='left:636px;top:439px' width='13' height='13'><circle cx='6.5' cy='6.5' r='6' fill='#fff' stroke='#333' stroke-width='1'/></svg>
<div class='t' style='left:654.4px;top:439.85px;font-size:12px;line-height:12px;color:#000;letter-spacing:0.25px;'>Стереть</div>
<svg class='r' style='left:555px;top:460px' width='13' height='13'><circle cx='6.5' cy='6.5' r='6' fill='#fff' stroke='#333' stroke-width='1'/></svg>
<div class='t' style='left:573.7px;top:460.85px;font-size:12px;line-height:12px;color:#000;letter-spacing:0.2px;'>Починить</div>
<svg class='r' style='left:636px;top:460px' width='13' height='13'><circle cx='6.5' cy='6.5' r='6' fill='#fff' stroke='#333' stroke-width='1'/></svg>
<div class='t' style='left:654.4px;top:460.85px;font-size:12px;line-height:12px;color:#000;letter-spacing:0.2px;'>Обновить</div>
<div class='r' style='left:548px;top:480px;width:165px;height:5px;box-sizing:border-box;border-top:1px solid #a8a8a8;border-left:1px solid #a8a8a8;border-right:1px solid #fff;border-bottom:1px solid #fff;background:#c0c0c0'></div>
<div class='r' style='left:552px;top:494px;width:13px;height:13px;box-sizing:border-box;border:1px solid #333;background:#fff'></div>
<div class='t' style='left:569.6px;top:495.85px;font-size:12px;line-height:12px;color:#000080;font-weight:700;'>Grid</div>
<div class='r' style='left:605px;top:489px;width:107px;height:21px;background:#0a120a'></div>
<svg class='r' style='left:605px;top:488px' width='108' height='22'><rect x='0.5' y='0.5' width='107' height='21' fill='#000' stroke='#b0b0b0'/><rect x='2' y='5' width='1' height='1' fill='#0a3c0a'/><rect x='2' y='7' width='1' height='1' fill='#ffee00'/><rect x='2' y='9' width='1' height='1' fill='#ffee00'/><rect x='2' y='11' width='1' height='1' fill='#ffee00'/><rect x='2' y='13' width='1' height='1' fill='#ffee00'/><rect x='2' y='15' width='1' height='1' fill='#ffee00'/><rect x='2' y='17' width='1' height='1' fill='#0a3c0a'/><rect x='4' y='5' width='1' height='1' fill='#ffee00'/><rect x='4' y='7' width='1' height='1' fill='#0a3c0a'/><rect x='4' y='9' width='1' height='1' fill='#0a3c0a'/><rect x='4' y='11' width='1' height='1' fill='#0a3c0a'/><rect x='4' y='13' width='1' height='1' fill='#ffee00'/><rect x='4' y='15' width='1' height='1' fill='#0a3c0a'/><rect x='4' y='17' width='1' height='1' fill='#ffee00'/><rect x='6' y='5' width='1' height='1' fill='#ffee00'/><rect x='6' y='7' width='1' height='1' fill='#0a3c0a'/><rect x='6' y='9' width='1' height='1' fill='#0a3c0a'/><rect x='6' y='11' width='1' height='1' fill='#ffee00'/><rect x='6' y='13' width='1' height='1' fill='#0a3c0a'/><rect x='6' y='15' width='1' height='1' fill='#0a3c0a'/><rect x='6' y='17' width='1' height='1' fill='#ffee00'/><rect x='8' y='5' width='1' height='1' fill='#ffee00'/><rect x='8' y='7' width='1' height='1' fill='#0a3c0a'/><rect x='8' y='9' width='1' height='1' fill='#ffee00'/><rect x='8' y='11' width='1' height='1' fill='#0a3c0a'/><rect x='8' y='13' width='1' height='1' fill='#0a3c0a'/><rect x='8' y='15' width='1' height='1' fill='#0a3c0a'/><rect x='8' y='17' width='1' height='1' fill='#ffee00'/><rect x='10' y='5' width='1' height='1' fill='#0a3c0a'/><rect x='10' y='7' width='1' height='1' fill='#ffee00'/><rect x='10' y='9' width='1' height='1' fill='#ffee00'/><rect x='10' y='11' width='1' height='1' fill='#ffee00'/><rect x='10' y='13' width='1' height='1' fill='#ffee00'/><rect x='10' y='15' width='1' height='1' fill='#ffee00'/><rect x='10' y='17' width='1' height='1' fill='#0a3c0a'/><rect x='12' y='5' width='1' height='1' fill='#0a3c0a'/><rect x='12' y='7' width='1' height='1' fill='#0a3c0a'/><rect x='12' y='9' width='1' height='1' fill='#0a3c0a'/><rect x='12' y='11' width='1' height='1' fill='#0a3c0a'/><rect x='12' y='13' width='1' height='1' fill='#0a3c0a'/><rect x='12' y='15' width='1' height='1' fill='#0a3c0a'/><rect x='12' y='17' width='1' height='1' fill='#0a3c0a'/><rect x='14' y='5' width='1' height='1' fill='#0a3c0a'/><rect x='14' y='7' width='1' height='1' fill='#ffee00'/><rect x='14' y='9' width='1' height='1' fill='#ffee00'/><rect x='14' y='11' width='1' height='1' fill='#ffee00'/><rect x='14' y='13' width='1' height='1' fill='#ffee00'/><rect x='14' y='15' width='1' height='1' fill='#ffee00'/><rect x='14' y='17' width='1' height='1' fill='#0a3c0a'/><rect x='16' y='5' width='1' height='1' fill='#ffee00'/><rect x='16' y='7' width='1' height='1' fill='#0a3c0a'/><rect x='16' y='9' width='1' height='1' fill='#0a3c0a'/><rect x='16' y='11' width='1' height='1' fill='#0a3c0a'/><rect x='16' y='13' width='1' height='1' fill='#ffee00'/><rect x='16' y='15' width='1' height='1' fill='#0a3c0a'/><rect x='16' y='17' width='1' height='1' fill='#ffee00'/><rect x='18' y='5' width='1' height='1' fill='#ffee00'/><rect x='18' y='7' width='1' height='1' fill='#0a3c0a'/><rect x='18' y='9' width='1' height='1' fill='#0a3c0a'/><rect x='18' y='11' width='1' height='1' fill='#ffee00'/><rect x='18' y='13' width='1' height='1' fill='#0a3c0a'/><rect x='18' y='15' width='1' height='1' fill='#0a3c0a'/><rect x='18' y='17' width='1' height='1' fill='#ffee00'/><rect x='20' y='5' width='1' height='1' fill='#ffee00'/><rect x='20' y='7' width='1' height='1' fill='#0a3c0a'/><rect x='20' y='9' width='1' height='1' fill='#ffee00'/><rect x='20' y='11' width='1' height='1' fill='#0a3c0a'/><rect x='20' y='13' width='1' height='1' fill='#0a3c0a'/><rect x='20' y='15' width='1' height='1' fill='#0a3c0a'/><rect x='20' y='17' width='1' height='1' fill='#ffee00'/><rect x='22' y='5' width='1' height='1' fill='#0a3c0a'/><rect x='22' y='7' width='1' height='1' fill='#ffee00'/><rect x='22' y='9' width='1' height='1' fill='#ffee00'/><rect x='22' y='11' width='1' height='1' fill='#ffee00'/><rect x='22' y='13' width='1' height='1' fill='#ffee00'/><rect x='22' y='15' width='1' height='1' fill='#ffee00'/><rect x='22' y='17' width='1' height='1' fill='#0a3c0a'/><rect x='24' y='5' width='1' height='1' fill='#0a3c0a'/><rect x='24' y='7' width='1' height='1' fill='#0a3c0a'/><rect x='24' y='9' width='1' height='1' fill='#0a3c0a'/><rect x='24' y='11' width='1' height='1' fill='#0a3c0a'/><rect x='24' y='13' width='1' height='1' fill='#0a3c0a'/><rect x='24' y='15' width='1' height='1' fill='#0a3c0a'/><rect x='24' y='17' width='1' height='1' fill='#0a3c0a'/><rect x='26' y='5' width='1' height='1' fill='#0a3c0a'/><rect x='26' y='7' width='1' height='1' fill='#0a3c0a'/><rect x='26' y='9' width='1' height='1' fill='#0a3c0a'/><rect x='26' y='11' width='1' height='1' fill='#0a3c0a'/><rect x='26' y='13' width='1' height='1' fill='#0a3c0a'/><rect x='26' y='15' width='1' height='1' fill='#0a3c0a'/><rect x='26' y='17' width='1' height='1' fill='#0a3c0a'/><rect x='28' y='5' width='1' height='1' fill='#0a3c0a'/><rect x='28' y='7' width='1' height='1' fill='#0a3c0a'/><rect x='28' y='9' width='1' height='1' fill='#0a3c0a'/><rect x='28' y='11' width='1' height='1' fill='#0a3c0a'/><rect x='28' y='13' width='1' height='1' fill='#0a3c0a'/><rect x='28' y='15' width='1' height='1' fill='#0a3c0a'/><rect x='28' y='17' width='1' height='1' fill='#0a3c0a'/><rect x='30' y='5' width='1' height='1' fill='#0a3c0a'/><rect x='30' y='7' width='1' height='1' fill='#0a3c0a'/><rect x='30' y='9' width='1' height='1' fill='#ffee00'/><rect x='30' y='11' width='1' height='1' fill='#0a3c0a'/><rect x='30' y='13' width='1' height='1' fill='#0a3c0a'/><rect x='30' y='15' width='1' height='1' fill='#ffee00'/><rect x='30' y='17' width='1' height='1' fill='#0a3c0a'/><rect x='32' y='5' width='1' height='1' fill='#0a3c0a'/><rect x='32' y='7' width='1' height='1' fill='#0a3c0a'/><rect x='32' y='9' width='1' height='1' fill='#0a3c0a'/><rect x='32' y='11' width='1' height='1' fill='#0a3c0a'/><rect x='32' y='13' width='1' height='1' fill='#0a3c0a'/><rect x='32' y='15' width='1' height='1' fill='#0a3c0a'/><rect x='32' y='17' width='1' height='1' fill='#0a3c0a'/><rect x='34' y='5' width='1' height='1' fill='#0a3c0a'/><rect x='34' y='7' width='1' height='1' fill='#0a3c0a'/><rect x='34' y='9' width='1' height='1' fill='#0a3c0a'/><rect x='34' y='11' width='1' height='1' fill='#0a3c0a'/><rect x='34' y='13' width='1' height='1' fill='#0a3c0a'/><rect x='34' y='15' width='1' height='1' fill='#0a3c0a'/><rect x='34' y='17' width='1' height='1' fill='#0a3c0a'/><rect x='36' y='5' width='1' height='1' fill='#0a3c0a'/><rect x='36' y='7' width='1' height='1' fill='#0a3c0a'/><rect x='36' y='9' width='1' height='1' fill='#0a3c0a'/><rect x='36' y='11' width='1' height='1' fill='#0a3c0a'/><rect x='36' y='13' width='1' height='1' fill='#0a3c0a'/><rect x='36' y='15' width='1' height='1' fill='#0a3c0a'/><rect x='36' y='17' width='1' height='1' fill='#0a3c0a'/><rect x='38' y='5' width='1' height='1' fill='#0a3c0a'/><rect x='38' y='7' width='1' height='1' fill='#ffee00'/><rect x='38' y='9' width='1' height='1' fill='#ffee00'/><rect x='38' y='11' width='1' height='1' fill='#ffee00'/><rect x='38' y='13' width='1' height='1' fill='#ffee00'/><rect x='38' y='15' width='1' height='1' fill='#ffee00'/><rect x='38' y='17' width='1' height='1' fill='#0a3c0a'/><rect x='40' y='5' width='1' height='1' fill='#ffee00'/><rect x='40' y='7' width='1' height='1' fill='#0a3c0a'/><rect x='40' y='9' width='1' height='1' fill='#0a3c0a'/><rect x='40' y='11' width='1' height='1' fill='#0a3c0a'/><rect x='40' y='13' width='1' height='1' fill='#ffee00'/><rect x='40' y='15' width='1' height='1' fill='#0a3c0a'/><rect x='40' y='17' width='1' height='1' fill='#ffee00'/><rect x='42' y='5' width='1' height='1' fill='#ffee00'/><rect x='42' y='7' width='1' height='1' fill='#0a3c0a'/><rect x='42' y='9' width='1' height='1' fill='#0a3c0a'/><rect x='42' y='11' width='1' height='1' fill='#ffee00'/><rect x='42' y='13' width='1' height='1' fill='#0a3c0a'/><rect x='42' y='15' width='1' height='1' fill='#0a3c0a'/><rect x='42' y='17' width='1' height='1' fill='#ffee00'/><rect x='44' y='5' width='1' height='1' fill='#ffee00'/><rect x='44' y='7' width='1' height='1' fill='#0a3c0a'/><rect x='44' y='9' width='1' height='1' fill='#ffee00'/><rect x='44' y='11' width='1' height='1' fill='#0a3c0a'/><rect x='44' y='13' width='1' height='1' fill='#0a3c0a'/><rect x='44' y='15' width='1' height='1' fill='#0a3c0a'/><rect x='44' y='17' width='1' height='1' fill='#ffee00'/><rect x='46' y='5' width='1' height='1' fill='#0a3c0a'/><rect x='46' y='7' width='1' height='1' fill='#ffee00'/><rect x='46' y='9' width='1' height='1' fill='#ffee00'/><rect x='46' y='11' width='1' height='1' fill='#ffee00'/><rect x='46' y='13' width='1' height='1' fill='#ffee00'/><rect x='46' y='15' width='1' height='1' fill='#ffee00'/><rect x='46' y='17' width='1' height='1' fill='#0a3c0a'/><rect x='48' y='5' width='1' height='1' fill='#0a3c0a'/><rect x='48' y='7' width='1' height='1' fill='#0a3c0a'/><rect x='48' y='9' width='1' height='1' fill='#0a3c0a'/><rect x='48' y='11' width='1' height='1' fill='#0a3c0a'/><rect x='48' y='13' width='1' height='1' fill='#0a3c0a'/><rect x='48' y='15' width='1' height='1' fill='#0a3c0a'/><rect x='48' y='17' width='1' height='1' fill='#0a3c0a'/><rect x='50' y='5' width='1' height='1' fill='#0a3c0a'/><rect x='50' y='7' width='1' height='1' fill='#ffee00'/><rect x='50' y='9' width='1' height='1' fill='#ffee00'/><rect x='50' y='11' width='1' height='1' fill='#ffee00'/><rect x='50' y='13' width='1' height='1' fill='#ffee00'/><rect x='50' y='15' width='1' height='1' fill='#ffee00'/><rect x='50' y='17' width='1' height='1' fill='#0a3c0a'/><rect x='52' y='5' width='1' height='1' fill='#ffee00'/><rect x='52' y='7' width='1' height='1' fill='#0a3c0a'/><rect x='52' y='9' width='1' height='1' fill='#0a3c0a'/><rect x='52' y='11' width='1' height='1' fill='#0a3c0a'/><rect x='52' y='13' width='1' height='1' fill='#ffee00'/><rect x='52' y='15' width='1' height='1' fill='#0a3c0a'/><rect x='52' y='17' width='1' height='1' fill='#ffee00'/><rect x='54' y='5' width='1' height='1' fill='#ffee00'/><rect x='54' y='7' width='1' height='1' fill='#0a3c0a'/><rect x='54' y='9' width='1' height='1' fill='#0a3c0a'/><rect x='54' y='11' width='1' height='1' fill='#ffee00'/><rect x='54' y='13' width='1' height='1' fill='#0a3c0a'/><rect x='54' y='15' width='1' height='1' fill='#0a3c0a'/><rect x='54' y='17' width='1' height='1' fill='#ffee00'/><rect x='56' y='5' width='1' height='1' fill='#ffee00'/><rect x='56' y='7' width='1' height='1' fill='#0a3c0a'/><rect x='56' y='9' width='1' height='1' fill='#ffee00'/><rect x='56' y='11' width='1' height='1' fill='#0a3c0a'/><rect x='56' y='13' width='1' height='1' fill='#0a3c0a'/><rect x='56' y='15' width='1' height='1' fill='#0a3c0a'/><rect x='56' y='17' width='1' height='1' fill='#ffee00'/><rect x='58' y='5' width='1' height='1' fill='#0a3c0a'/><rect x='58' y='7' width='1' height='1' fill='#ffee00'/><rect x='58' y='9' width='1' height='1' fill='#ffee00'/><rect x='58' y='11' width='1' height='1' fill='#ffee00'/><rect x='58' y='13' width='1' height='1' fill='#ffee00'/><rect x='58' y='15' width='1' height='1' fill='#ffee00'/><rect x='58' y='17' width='1' height='1' fill='#0a3c0a'/><rect x='60' y='5' width='1' height='1' fill='#0a3c0a'/><rect x='60' y='7' width='1' height='1' fill='#0a3c0a'/><rect x='60' y='9' width='1' height='1' fill='#0a3c0a'/><rect x='60' y='11' width='1' height='1' fill='#0a3c0a'/><rect x='60' y='13' width='1' height='1' fill='#0a3c0a'/><rect x='60' y='15' width='1' height='1' fill='#0a3c0a'/><rect x='60' y='17' width='1' height='1' fill='#0a3c0a'/><rect x='62' y='5' width='1' height='1' fill='#0a3c0a'/><rect x='62' y='7' width='1' height='1' fill='#0a3c0a'/><rect x='62' y='9' width='1' height='1' fill='#0a3c0a'/><rect x='62' y='11' width='1' height='1' fill='#0a3c0a'/><rect x='62' y='13' width='1' height='1' fill='#0a3c0a'/><rect x='62' y='15' width='1' height='1' fill='#0a3c0a'/><rect x='62' y='17' width='1' height='1' fill='#0a3c0a'/><rect x='64' y='5' width='1' height='1' fill='#0a3c0a'/><rect x='64' y='7' width='1' height='1' fill='#0a3c0a'/><rect x='64' y='9' width='1' height='1' fill='#0a3c0a'/><rect x='64' y='11' width='1' height='1' fill='#0a3c0a'/><rect x='64' y='13' width='1' height='1' fill='#0a3c0a'/><rect x='64' y='15' width='1' height='1' fill='#0a3c0a'/><rect x='64' y='17' width='1' height='1' fill='#0a3c0a'/><rect x='66' y='5' width='1' height='1' fill='#0a3c0a'/><rect x='66' y='7' width='1' height='1' fill='#0a3c0a'/><rect x='66' y='9' width='1' height='1' fill='#ffee00'/><rect x='66' y='11' width='1' height='1' fill='#0a3c0a'/><rect x='66' y='13' width='1' height='1' fill='#0a3c0a'/><rect x='66' y='15' width='1' height='1' fill='#ffee00'/><rect x='66' y='17' width='1' height='1' fill='#0a3c0a'/><rect x='68' y='5' width='1' height='1' fill='#0a3c0a'/><rect x='68' y='7' width='1' height='1' fill='#0a3c0a'/><rect x='68' y='9' width='1' height='1' fill='#0a3c0a'/><rect x='68' y='11' width='1' height='1' fill='#0a3c0a'/><rect x='68' y='13' width='1' height='1' fill='#0a3c0a'/><rect x='68' y='15' width='1' height='1' fill='#0a3c0a'/><rect x='68' y='17' width='1' height='1' fill='#0a3c0a'/><rect x='70' y='5' width='1' height='1' fill='#0a3c0a'/><rect x='70' y='7' width='1' height='1' fill='#0a3c0a'/><rect x='70' y='9' width='1' height='1' fill='#0a3c0a'/><rect x='70' y='11' width='1' height='1' fill='#0a3c0a'/><rect x='70' y='13' width='1' height='1' fill='#0a3c0a'/><rect x='70' y='15' width='1' height='1' fill='#0a3c0a'/><rect x='70' y='17' width='1' height='1' fill='#0a3c0a'/><rect x='72' y='5' width='1' height='1' fill='#0a3c0a'/><rect x='72' y='7' width='1' height='1' fill='#0a3c0a'/><rect x='72' y='9' width='1' height='1' fill='#0a3c0a'/><rect x='72' y='11' width='1' height='1' fill='#0a3c0a'/><rect x='72' y='13' width='1' height='1' fill='#0a3c0a'/><rect x='72' y='15' width='1' height='1' fill='#0a3c0a'/><rect x='72' y='17' width='1' height='1' fill='#0a3c0a'/><rect x='74' y='5' width='1' height='1' fill='#0a3c0a'/><rect x='74' y='7' width='1' height='1' fill='#ffee00'/><rect x='74' y='9' width='1' height='1' fill='#ffee00'/><rect x='74' y='11' width='1' height='1' fill='#ffee00'/><rect x='74' y='13' width='1' height='1' fill='#ffee00'/><rect x='74' y='15' width='1' height='1' fill='#ffee00'/><rect x='74' y='17' width='1' height='1' fill='#0a3c0a'/><rect x='76' y='5' width='1' height='1' fill='#ffee00'/><rect x='76' y='7' width='1' height='1' fill='#0a3c0a'/><rect x='76' y='9' width='1' height='1' fill='#0a3c0a'/><rect x='76' y='11' width='1' height='1' fill='#0a3c0a'/><rect x='76' y='13' width='1' height='1' fill='#ffee00'/><rect x='76' y='15' width='1' height='1' fill='#0a3c0a'/><rect x='76' y='17' width='1' height='1' fill='#ffee00'/><rect x='78' y='5' width='1' height='1' fill='#ffee00'/><rect x='78' y='7' width='1' height='1' fill='#0a3c0a'/><rect x='78' y='9' width='1' height='1' fill='#0a3c0a'/><rect x='78' y='11' width='1' height='1' fill='#ffee00'/><rect x='78' y='13' width='1' height='1' fill='#0a3c0a'/><rect x='78' y='15' width='1' height='1' fill='#0a3c0a'/><rect x='78' y='17' width='1' height='1' fill='#ffee00'/><rect x='80' y='5' width='1' height='1' fill='#ffee00'/><rect x='80' y='7' width='1' height='1' fill='#0a3c0a'/><rect x='80' y='9' width='1' height='1' fill='#ffee00'/><rect x='80' y='11' width='1' height='1' fill='#0a3c0a'/><rect x='80' y='13' width='1' height='1' fill='#0a3c0a'/><rect x='80' y='15' width='1' height='1' fill='#0a3c0a'/><rect x='80' y='17' width='1' height='1' fill='#ffee00'/><rect x='82' y='5' width='1' height='1' fill='#0a3c0a'/><rect x='82' y='7' width='1' height='1' fill='#ffee00'/><rect x='82' y='9' width='1' height='1' fill='#ffee00'/><rect x='82' y='11' width='1' height='1' fill='#ffee00'/><rect x='82' y='13' width='1' height='1' fill='#ffee00'/><rect x='82' y='15' width='1' height='1' fill='#ffee00'/><rect x='82' y='17' width='1' height='1' fill='#0a3c0a'/><rect x='84' y='5' width='1' height='1' fill='#0a3c0a'/><rect x='84' y='7' width='1' height='1' fill='#0a3c0a'/><rect x='84' y='9' width='1' height='1' fill='#0a3c0a'/><rect x='84' y='11' width='1' height='1' fill='#0a3c0a'/><rect x='84' y='13' width='1' height='1' fill='#0a3c0a'/><rect x='84' y='15' width='1' height='1' fill='#0a3c0a'/><rect x='84' y='17' width='1' height='1' fill='#0a3c0a'/><rect x='86' y='5' width='1' height='1' fill='#0a3c0a'/><rect x='86' y='7' width='1' height='1' fill='#0a3c0a'/><rect x='86' y='9' width='1' height='1' fill='#0a3c0a'/><rect x='86' y='11' width='1' height='1' fill='#0a3c0a'/><rect x='86' y='13' width='1' height='1' fill='#0a3c0a'/><rect x='86' y='15' width='1' height='1' fill='#0a3c0a'/><rect x='86' y='17' width='1' height='1' fill='#0a3c0a'/><rect x='88' y='5' width='1' height='1' fill='#0a3c0a'/><rect x='88' y='7' width='1' height='1' fill='#ffee00'/><rect x='88' y='9' width='1' height='1' fill='#0a3c0a'/><rect x='88' y='11' width='1' height='1' fill='#0a3c0a'/><rect x='88' y='13' width='1' height='1' fill='#0a3c0a'/><rect x='88' y='15' width='1' height='1' fill='#0a3c0a'/><rect x='88' y='17' width='1' height='1' fill='#ffee00'/><rect x='90' y='5' width='1' height='1' fill='#ffee00'/><rect x='90' y='7' width='1' height='1' fill='#ffee00'/><rect x='90' y='9' width='1' height='1' fill='#ffee00'/><rect x='90' y='11' width='1' height='1' fill='#ffee00'/><rect x='90' y='13' width='1' height='1' fill='#ffee00'/><rect x='90' y='15' width='1' height='1' fill='#ffee00'/><rect x='90' y='17' width='1' height='1' fill='#ffee00'/><rect x='92' y='5' width='1' height='1' fill='#0a3c0a'/><rect x='92' y='7' width='1' height='1' fill='#0a3c0a'/><rect x='92' y='9' width='1' height='1' fill='#0a3c0a'/><rect x='92' y='11' width='1' height='1' fill='#0a3c0a'/><rect x='92' y='13' width='1' height='1' fill='#0a3c0a'/><rect x='92' y='15' width='1' height='1' fill='#0a3c0a'/><rect x='92' y='17' width='1' height='1' fill='#ffee00'/><rect x='94' y='5' width='1' height='1' fill='#0a3c0a'/><rect x='94' y='7' width='1' height='1' fill='#0a3c0a'/><rect x='94' y='9' width='1' height='1' fill='#0a3c0a'/><rect x='94' y='11' width='1' height='1' fill='#0a3c0a'/><rect x='94' y='13' width='1' height='1' fill='#0a3c0a'/><rect x='94' y='15' width='1' height='1' fill='#0a3c0a'/><rect x='94' y='17' width='1' height='1' fill='#0a3c0a'/><rect x='96' y='5' width='1' height='1' fill='#0a3c0a'/><rect x='96' y='7' width='1' height='1' fill='#0a3c0a'/><rect x='96' y='9' width='1' height='1' fill='#0a3c0a'/><rect x='96' y='11' width='1' height='1' fill='#0a3c0a'/><rect x='96' y='13' width='1' height='1' fill='#0a3c0a'/><rect x='96' y='15' width='1' height='1' fill='#0a3c0a'/><rect x='96' y='17' width='1' height='1' fill='#0a3c0a'/><rect x='98' y='5' width='1' height='1' fill='#0a3c0a'/><rect x='98' y='7' width='1' height='1' fill='#0a3c0a'/><rect x='98' y='9' width='1' height='1' fill='#0a3c0a'/><rect x='98' y='11' width='1' height='1' fill='#0a3c0a'/><rect x='98' y='13' width='1' height='1' fill='#0a3c0a'/><rect x='98' y='15' width='1' height='1' fill='#0a3c0a'/><rect x='98' y='17' width='1' height='1' fill='#0a3c0a'/><rect x='100' y='5' width='1' height='1' fill='#0a3c0a'/><rect x='100' y='7' width='1' height='1' fill='#0a3c0a'/><rect x='100' y='9' width='1' height='1' fill='#0a3c0a'/><rect x='100' y='11' width='1' height='1' fill='#0a3c0a'/><rect x='100' y='13' width='1' height='1' fill='#0a3c0a'/><rect x='100' y='15' width='1' height='1' fill='#0a3c0a'/><rect x='100' y='17' width='1' height='1' fill='#0a3c0a'/><rect x='102' y='5' width='1' height='1' fill='#0a3c0a'/><rect x='102' y='7' width='1' height='1' fill='#0a3c0a'/><rect x='102' y='9' width='1' height='1' fill='#0a3c0a'/><rect x='102' y='11' width='1' height='1' fill='#0a3c0a'/><rect x='102' y='13' width='1' height='1' fill='#0a3c0a'/><rect x='102' y='15' width='1' height='1' fill='#0a3c0a'/><rect x='102' y='17' width='1' height='1' fill='#0a3c0a'/><rect x='104' y='5' width='1' height='1' fill='#0a3c0a'/><rect x='104' y='7' width='1' height='1' fill='#0a3c0a'/><rect x='104' y='9' width='1' height='1' fill='#0a3c0a'/><rect x='104' y='11' width='1' height='1' fill='#0a3c0a'/><rect x='104' y='13' width='1' height='1' fill='#0a3c0a'/><rect x='104' y='15' width='1' height='1' fill='#0a3c0a'/><rect x='104' y='17' width='1' height='1' fill='#0a3c0a'/><rect x='106' y='5' width='1' height='1' fill='#0a3c0a'/><rect x='106' y='7' width='1' height='1' fill='#0a3c0a'/><rect x='106' y='9' width='1' height='1' fill='#0a3c0a'/><rect x='106' y='11' width='1' height='1' fill='#0a3c0a'/><rect x='106' y='13' width='1' height='1' fill='#0a3c0a'/><rect x='106' y='15' width='1' height='1' fill='#0a3c0a'/><rect x='106' y='17' width='1' height='1' fill='#0a3c0a'/></svg>
<div class='r' style='left:715px;top:133px;width:5px;height:378px;background:#f0f0f0'></div>
<div class='r' style='left:717px;top:127px;width:2px;height:385px;background:#fff'></div>
<div class='r' style='left:719px;top:127px;width:71px;height:386px;box-sizing:border-box;border-left:1px solid #8e8e8e;border-top:1px solid #8e8e8e;background:#a9a9a9'></div>
<div class='r' style='left:717px;top:513px;width:73px;height:1px;background:#fff'></div>
<div class='r' style='left:720px;top:128px;width:70px;height:385px;box-sizing:border-box;border-left:1px solid #767676;border-top:1px solid #767676'></div>
<svg class='r' style='left:730px;top:138px' width='13' height='13'><circle cx='6.5' cy='6.5' r='6' fill='#d4d4d4' stroke='#f0f0f0' stroke-width='1'/></svg>
<div class='t' style='left:748px;top:138.85px;font-size:12px;line-height:12px;color:#7a7a7a;'>API</div>
<svg class='r' style='left:730px;top:159px' width='13' height='13'><circle cx='6.5' cy='6.5' r='6' fill='#fff' stroke='#e8e8e8' stroke-width='1'/></svg>
<div class='t' style='left:748px;top:161.36px;font-size:11.4px;line-height:11.4px;color:#7a7a7a;'>PIO</div>
<div class='r' style='left:728px;top:188px;width:19px;height:10px;box-sizing:border-box;border:1px solid #000;background:#808080'></div>
<div class='r' style='left:728px;top:219px;width:55px;height:21px;background:#e1e1e1'></div>
<div class='t' style='left:738.7px;top:223.59px;font-size:12.3px;line-height:12.3px;color:#000;'>Sleep</div>
<div class='r' style='left:728px;top:281px;width:55px;height:21px;background:#e1e1e1'></div>
<div class='t' style='left:737.2px;top:285.59px;font-size:12.3px;line-height:12.3px;color:#000;'>Recall</div>
<div class='r' style='left:728px;top:467px;width:55px;height:21px;background:#e1e1e1'></div>
<div class='t' style='left:738.2px;top:471.85px;font-size:12px;line-height:12px;color:#000;'>Passp</div>
<div class='r' style='left:726px;top:397px;width:27px;height:13px;box-sizing:border-box;border:1px solid #333;border-radius:2px;background:#a0a0a0'></div>
<div class='t' style='left:731px;top:399.46px;font-size:9.5px;line-height:9.5px;color:#c4c4c4;font-weight:700;'>WR</div>
<div class='r' style='left:758px;top:397px;width:27px;height:13px;box-sizing:border-box;border:1px solid #333;border-radius:2px;background:#a0a0a0'></div>
<div class='t' style='left:763px;top:399.46px;font-size:9.5px;line-height:9.5px;color:#c4c4c4;font-weight:700;'>RD</div>
<div class='r' style='left:0px;top:511px;width:790px;height:7px;background:#f0f0f0'></div>
<div class='r' style='left:0px;top:511px;width:717px;height:2px;background:#fff'></div>
<div class='r' style='left:0px;top:513px;width:717px;height:1px;background:#d8d8d8'></div>
<div class='r' style='left:0px;top:518px;width:701px;height:82px;background:#f3fff3;border-top:1px solid #8a8f98;box-sizing:border-box'></div>
<div class='r' style='left:69px;top:519px;width:1px;height:81px;background:#e4ece4'></div>
<div class='r' style='left:0px;top:539px;width:701px;height:1px;background:#e4ece4'></div>
<div class='r' style='left:0px;top:559px;width:701px;height:1px;background:#e4ece4'></div>
<div class='r' style='left:0px;top:579px;width:701px;height:1px;background:#e4ece4'></div>
<div class='t' style='left:7px;top:524.00px;font-size:13px;line-height:13px;color:#000;'>16:50:29</div>
<div class='t' style='left:75px;top:524.00px;font-size:13px;line-height:13px;color:#000;letter-spacing:-0.14px;'>Starting Reading, LBA=0..976773167, FULL, sequential access, timeout 10000ms</div>
<div class='t' style='left:7px;top:544.00px;font-size:13px;line-height:13px;color:#000;'>18:44:34</div>
<div class='t' style='left:75px;top:544.00px;font-size:13px;line-height:13px;color:#000;letter-spacing:0.08px;'>*** Scan results: no warnings, no errors. Last block at 976773167 (500 GB), time 1 hours 54 minutes 5 ...</div>
<div class='t' style='left:7px;top:564.00px;font-size:13px;line-height:13px;color:#000;'>18:44:34</div>
<div class='t' style='left:75px;top:564.00px;font-size:13px;line-height:13px;color:#0000ff;letter-spacing:-0.08px;'>Speed: Maximum 92 MB/s. Average 68 MB/s. Minimum 45 MB/s. 423 points.</div>
<div class='r' style='left:701px;top:518px;width:17px;height:82px;background:#f0f0f0;border-top:1px solid #a0a0a0;box-sizing:border-box'></div>
<div class='r' style='left:701px;top:565px;width:16px;height:17px;background:#cdcdcd'></div>
<svg class='r' style='left:701px;top:518px' width='17' height='82'><path d='M4.5,14.5l4,-4l4,4' fill='none' stroke='#555' stroke-width='1.6'/><path d='M4.5,69.5l4,4l4,-4' fill='none' stroke='#555' stroke-width='1.6'/></svg>
<div class='r' style='left:718px;top:518px;width:72px;height:82px;background:#aaaaaa;border-top:1px solid #a0a0a0;border-left:1px solid #8a8a8a;box-sizing:border-box'></div>
<div class='r' style='left:728px;top:527px;width:13px;height:13px;box-sizing:border-box;border:1px solid #333;background:#fff'></div>
<svg class='r' style='left:728px;top:527px' width='13' height='13'><path d='M2.5,6.5l2.5,3l5.5,-6' fill='none' stroke='#333' stroke-width='1.2'/></svg>
<div class='t' style='left:745.8px;top:527.85px;font-size:12px;line-height:12px;color:#000;'>Звук</div>
<div class='r' style='left:728px;top:550px;width:13px;height:13px;box-sizing:border-box;border:1px solid #333;background:#fff'></div>
<div class='t' style='left:745.8px;top:550.85px;font-size:12px;line-height:12px;color:#000;'>Hints</div>
</body></html>
